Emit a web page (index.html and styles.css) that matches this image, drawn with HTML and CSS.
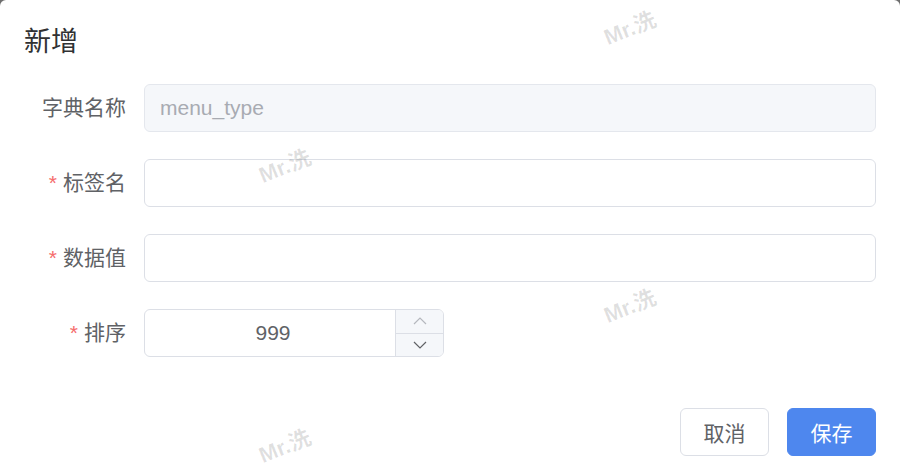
FILE: index.html
```html
<!DOCTYPE html>
<html lang="zh">
<head>
<meta charset="utf-8">
<title>新增</title>
<link rel="stylesheet" href="styles.css">
</head>
<body>
<div class="dialog">
  <div class="dialog-header"><span class="dialog-title">新增</span></div>
  <div class="dialog-body">
    <form class="form">
      <div class="form-item">
        <label class="form-label">字典名称</label>
        <div class="form-content">
          <div class="input is-disabled"><span class="input-text">menu_type</span></div>
        </div>
      </div>
      <div class="form-item">
        <label class="form-label"><span class="req">*</span>标签名</label>
        <div class="form-content"><div class="input"></div></div>
      </div>
      <div class="form-item">
        <label class="form-label"><span class="req">*</span>数据值</label>
        <div class="form-content"><div class="input"></div></div>
      </div>
      <div class="form-item">
        <label class="form-label"><span class="req">*</span>排序</label>
        <div class="form-content">
          <div class="number-input">
            <div class="number-value">999</div>
            <div class="number-controls">
              <span class="ctrl ctrl-up"><svg width="14" height="8" viewBox="0 0 14 8"><path d="M1 7 L7 1 L13 7" fill="none" stroke="currentColor" stroke-width="1.2"/></svg></span>
              <span class="ctrl ctrl-down"><svg width="14" height="8" viewBox="0 0 14 8"><path d="M1 1 L7 7 L13 1" fill="none" stroke="currentColor" stroke-width="1.2"/></svg></span>
            </div>
          </div>
        </div>
      </div>
    </form>
  </div>
  <div class="dialog-footer">
    <button class="btn">取消</button>
    <button class="btn btn-primary">保存</button>
  </div>
  <span class="wm wm1">Mr.洗</span>
  <span class="wm wm2">Mr.洗</span>
  <span class="wm wm3">Mr.洗</span>
  <span class="wm wm4">Mr.洗</span>
</div>
</body>
</html>
```
FILE: styles.css
```css
html, body {
  margin: 0;
  padding: 0;
  background: #6e6e6e;
  width: 900px;
  height: 474px;
  overflow: hidden;
}
.dialog {
  position: relative;
  width: 900px;
  height: 474px;
  background: #fff;
  border-radius: 6px 6px 0 0;
  font-family: "Liberation Sans", "Noto Sans CJK SC", sans-serif;
  box-sizing: border-box;
  overflow: hidden;
}
.dialog-header {
  padding: 24px 24px 0;
}
.dialog-title {
  display: block;
  font-size: 27px;
  line-height: 36px;
  color: #303133;
}
.dialog-body {
  padding: 24px 24px 24px;
}
.form-item {
  display: flex;
  height: 48px;
  margin-bottom: 27px;
}
.form-label {
  width: 120px;
  box-sizing: border-box;
  padding-right: 18px;
  text-align: right;
  font-size: 21px;
  line-height: 48px;
  color: #606266;
}
.req {
  color: #f56c6c;
  margin-right: 6px;
}
.form-content {
  flex: 1;
  display: flex;
}
.input {
  flex: 1;
  height: 48px;
  box-sizing: border-box;
  border: 1px solid #dcdfe6;
  border-radius: 6px;
  background: #fff;
  padding: 0 15px;
  font-size: 21px;
  line-height: 46px;
}
.input.is-disabled {
  background: #f5f7fa;
  border-color: #e4e7ed;
  color: #a8abb2;
}
.number-input {
  width: 300px;
  height: 48px;
  box-sizing: border-box;
  border: 1px solid #dcdfe6;
  border-radius: 6px;
  display: flex;
  overflow: hidden;
}
.number-value {
  flex: 1;
  text-align: center;
  padding-left: 6px;
  font-size: 21px;
  line-height: 46px;
  color: #606266;
}
.number-controls {
  width: 47px;
  display: flex;
  flex-direction: column;
  border-left: 1px solid #dcdfe6;
  background: #f5f7fa;
}
.ctrl {
  flex: 1;
  display: flex;
  align-items: center;
  justify-content: center;
}
.ctrl-up {
  color: #b5b8be;
  border-bottom: 1px solid #dcdfe6;
}
.ctrl-down {
  color: #606266;
}
.dialog-footer {
  display: flex;
  justify-content: flex-end;
  gap: 18px;
  padding: 0 24px 18px;
}
.btn {
  height: 48px;
  width: 89px;
  padding: 0;
  box-sizing: border-box;
  border: 1px solid #dcdfe6;
  border-radius: 6px;
  background: #fff;
  color: #606266;
  font-family: "Liberation Sans", "Noto Sans CJK SC", sans-serif;
  font-size: 21px;
  cursor: pointer;
}
.btn-primary {
  background: #4e87ee;
  border-color: #4e87ee;
  color: #fff;
}
.wm {
  position: absolute;
  font-size: 22px;
  font-weight: bold;
  color: rgba(0, 0, 0, 0.12);
  transform: rotate(-22deg);
  white-space: nowrap;
  pointer-events: none;
}
.wm1 { left: 602px; top: 10px; }
.wm2 { left: 257px; top: 148px; }
.wm3 { left: 602px; top: 288px; }
.wm4 { left: 257px; top: 428px; }
```
